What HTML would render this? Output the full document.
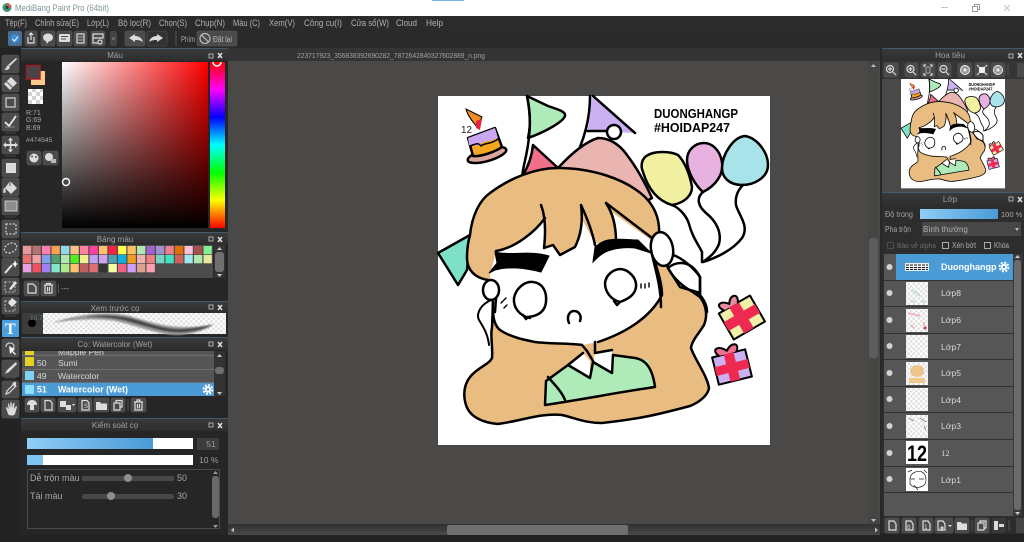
<!DOCTYPE html>
<html lang="vi"><head><meta charset="utf-8"><title>MediBang Paint Pro</title>
<style>
html,body{margin:0;padding:0;background:#222;width:1024px;height:542px;overflow:hidden}
svg{display:block;font-family:"Liberation Sans",sans-serif}
.m{fill:#b0b0b0;font-size:8.8px}
.h{fill:#a0a0a0;font-size:8px;text-anchor:middle}
.l{fill:#d8d8d8;font-size:8.6px}
.k{fill:#a9a9a9;font-size:8px}
.b{fill:#4b4b4b;stroke:#585858;stroke-width:.6}
.i{fill:#dcdcdc}
.s{fill:none;stroke:#dcdcdc;stroke-width:1.2}
.a{stroke:#000;stroke-width:2.5;stroke-linejoin:round;stroke-linecap:round}
.n{fill:none}
</style></head><body>
<svg width="1024" height="542" viewBox="0 0 1024 542" xmlns="http://www.w3.org/2000/svg">
<defs>
<clipPath id="huec"><rect x="205" y="62" width="25" height="20"/></clipPath>
<clipPath id="listc"><rect x="22" y="351" width="192" height="45"/></clipPath>
<filter id="soft" x="-5%" y="-20%" width="110%" height="140%"><feGaussianBlur stdDeviation=".9"/></filter>
<linearGradient id="sv1" x1="0" x2="1" y1="0" y2="0"><stop offset="0" stop-color="#fff"/><stop offset="1" stop-color="#f00"/></linearGradient>
<linearGradient id="sv2" x1="0" x2="0" y1="0" y2="1"><stop offset="0" stop-color="#000" stop-opacity="0"/><stop offset="1" stop-color="#000"/></linearGradient>
<linearGradient id="hue" x1="0" x2="0" y1="0" y2="1"><stop offset="0" stop-color="#f00"/><stop offset=".167" stop-color="#f0f"/><stop offset=".333" stop-color="#00f"/><stop offset=".5" stop-color="#0ff"/><stop offset=".667" stop-color="#0f0"/><stop offset=".833" stop-color="#ff0"/><stop offset="1" stop-color="#f00"/></linearGradient>
<linearGradient id="blu" x1="0" x2="1" y1="0" y2="0"><stop offset="0" stop-color="#8fcdf5"/><stop offset="1" stop-color="#4a9ad8"/></linearGradient>
<linearGradient id="hd" x1="0" x2="0" y1="0" y2="1"><stop offset="0" stop-color="#3a3a3a"/><stop offset="1" stop-color="#2e2e2e"/></linearGradient>
<linearGradient id="sc" x1="0" x2="0" y1="0" y2="1"><stop offset="0" stop-color="#303030"/><stop offset="1" stop-color="#4a4a4a"/></linearGradient>
<pattern id="chk" width="8" height="8" patternUnits="userSpaceOnUse"><rect width="8" height="8" fill="#fff"/><rect width="4" height="4" fill="#d4d4d4"/><rect x="4" y="4" width="4" height="4" fill="#d4d4d4"/></pattern>
<pattern id="chk2" width="5" height="5" patternUnits="userSpaceOnUse"><rect width="5" height="5" fill="#fff"/><rect width="2.5" height="2.5" fill="#e2e2e2"/><rect x="2.5" y="2.5" width="2.5" height="2.5" fill="#e2e2e2"/></pattern>
<g id="gear"><circle r="3.2" fill="#fff"/><circle r="4.4" fill="none" stroke="#fff" stroke-width="2" stroke-dasharray="2 1.45"/><circle r="1.3" fill="#4a9ad4"/></g>
<g id="art">
<rect x="438" y="96" width="332" height="349" fill="#fff"/>
<path d="M527,96C530,110 531,125 528,138C545,132 563,122 565,116C566,112 560,110 548,106Z" fill="#aeebb9" class="a"/>
<path d="M533,145L558,168L523,175C529,165 532,155 533,145Z" fill="#f0708c" class="a"/>
<path d="M590,96L635,133L587,131C590,120 591,108 590,96Z" fill="#cbb0f2"/>
<path d="M593,96L635,133M587,131L618,131" class="a n"/>
<path d="M527,96C532,120 530,140 524,165L522,176M590,96C590,115 586,132 580,147" class="a n"/>
<circle cx="614" cy="132" r="7" fill="#fff" class="a"/>
<path d="M558,168C570,155 585,142 598,138C610,138 620,145 627,155C637,168 646,185 652,198L640,205L570,180Z" fill="#eab5b0" class="a"/>
<path d="M672,205C685,203 692,195 692,187C690,175 685,162 678,155C670,151 655,151 648,155C642,158 640,165 643,172C647,185 655,200 672,205Z" fill="#f0f0a0" class="a"/>
<path d="M703,192C715,186 724,175 722,162C720,150 712,143 704,143C695,143 687,150 687,160C687,172 696,186 703,192Z" fill="#e8b2e0" class="a"/>
<path d="M742,185C755,185 768,177 768,165C768,152 757,138 745,136C733,137 722,155 722,168C722,178 730,185 742,185Z" fill="#a8e3ea" class="a"/>
<path d="M672,205C680,208 687,217 689,224C692,236 698,244 702,252L702,262M703,192C696,198 698,206 706,213C716,221 722,232 719,244C715,254 708,258 703,262C716,258 733,250 742,238C750,226 738,214 736,205C735,197 738,190 743,185" class="a n"/>
<path d="M438,253L470,235L467,270L458,285Z" fill="#7fe0c8" class="a"/>
<path d="M470,235C472,215 480,200 490,193C510,178 535,168 558,168C590,168 625,178 645,197C655,207 660,220 659,235L668,268C675,280 690,290 700,297C706,305 708,315 704,325C700,332 692,340 691,348C695,360 707,375 709,388C708,395 700,402 690,406C660,414 640,419 602,423C585,423 575,418 562,415C540,413 525,420 498,424C485,423 470,418 466,405C462,392 465,380 475,372C482,366 490,363 492,358C493,345 490,335 492,328L493,302L488,280C475,278 467,270 467,258C467,250 468,242 470,235Z" fill="#e9bd82" class="a"/>
<path d="M496,252C515,248 535,232 545,218L544,247L553,245L560,255L575,247C580,238 582,228 581,217L595,244L616,240L613,213L651,240L652,250L660,283L662,295C655,310 640,325 598,342L582,345C560,343 545,344 532,342C515,338 502,335 498,328C493,318 492,310 493,302L490,275Z" fill="#fff"/>
<path d="M493,302C492,318 495,326 500,330C510,337 525,340 535,342C550,344 570,343 582,345M598,342C625,333 650,318 662,295M652,250C655,265 662,280 662,295M496,251C515,248 535,232 545,218M541,205C545,215 546,230 544,248L553,245L560,255L575,247C581,235 583,220 581,205C588,220 593,235 595,245M606,203C612,212 616,225 616,241M606,203L652,238" class="a n"/>
<path d="M495,252C510,256 530,250 549,256L541,272C525,268 510,266 495,270L489,273L497,263Z" fill="#000" stroke="#000"/>
<path d="M593,262L595,247C600,243 603,241 608,240C620,238 630,240 638,240L651,253L635,248C625,247 618,248 611,250C603,252 598,257 593,262Z" fill="#000" stroke="#000"/>
<path d="M668,268C675,262 690,258 700,277L700,293L680,287Z" fill="#fff" class="a"/>
<path d="M673,255C682,258 694,268 700,277L700,295C704,300 707,305 707,312M668,268C675,282 690,291 700,296" class="a n"/>
<ellipse cx="662" cy="249" rx="11" ry="17" fill="#fff" class="a" transform="rotate(-10 662 249)"/>
<path d="M651,250C654,265 661,285 661,307" class="a n"/>
<ellipse cx="491" cy="290" rx="8" ry="10" fill="#fff" class="a"/>
<path d="M491,300C480,305 476,314 479,320C484,328 488,335 489,345" class="a n" style="stroke-width:2"/>
<path d="M496,298L495,312" class="a n"/>
<path d="M530,318C520,316 513,308 514,298C516,288 525,281 533,282C543,283 547,292 546,302C545,312 538,316 528,317L526,319L523,315" fill="#fff" class="a"/>
<path d="M620,302C612,300 605,293 605,283C606,275 613,269 621,269C629,270 637,278 636,287C635,295 628,299 620,302L617,305L614,301" fill="#fff" class="a"/>
<path d="M501,303L506,298M504,308L507,305M641,284V288M645,284V288M649,283V287" class="a n" style="stroke-width:1.4"/>
<path d="M569,323C566,316 570,311 574,311C579,311 582,316 580,321" class="a n"/>
<path d="M545,382L568,365L590,378L593,362L612,373L613,355L648,360L655,387L545,405Z" fill="#aeebb9"/>
<path d="M568,365L583,353L590,361L590,378ZM595,353L612,350L612,373L593,362Z" fill="#fff"/>
<path d="M545,405L546,381L568,365L590,378L593,362L612,373L613,355L635,358C648,360 653,372 655,387C620,392 585,399 545,405ZM568,365L583,353M595,342V353L612,350M548,377C555,385 562,392 565,400M582,345L587,351L593,361" class="a n"/>
<g transform="rotate(-30 741 318)"><rect x="724" y="303" width="36" height="30" fill="#f0f0a8" class="a" style="stroke-width:2"/><rect x="736" y="303" width="11" height="30" fill="#ee2a50"/><rect x="724" y="313" width="36" height="10" fill="#ee2a50"/><path d="M730,303C724,294 732,292 738,300C742,292 752,294 746,303" fill="#e88ca0" class="a" style="stroke-width:2"/></g>
<g transform="rotate(-14 732 367)"><rect x="715" y="353" width="34" height="28" fill="#cbb0f2" class="a" style="stroke-width:2"/><rect x="727" y="353" width="10" height="28" fill="#ee2a50"/><rect x="715" y="363" width="34" height="9" fill="#ee2a50"/><path d="M722,353C715,345 724,342 731,350C737,342 746,345 740,353" fill="#f07090" class="a" style="stroke-width:2"/></g>
<ellipse cx="487" cy="155" rx="20" ry="6" transform="rotate(-16 487 155)" fill="#dba6a0" class="a"/>
<path d="M468,138L495,128L502,147C495,152 480,157 473,156Z" fill="#f5a623" class="a"/>
<path d="M468,138L495,128L498,138C490,142 483,140 478,146C473,145 470,146 469,145Z" fill="#c9a8f0"/>
<path d="M470,146C476,144 478,142 481,146C486,142 490,145 498,139" class="a n" style="stroke-width:1.5"/>
<path d="M466,109L482,117L477,127C474,123 468,117 466,109Z" fill="#f08a28" stroke="#000"/>
<path d="M476,121L482,119L480,130L476,128Z" fill="#e82040"/>
<text x="461" y="133" font-size="10" fill="#222" textLength="11" lengthAdjust="spacingAndGlyphs">12</text>
<text x="654" y="118" font-size="13" font-weight="bold" fill="#000" textLength="84" lengthAdjust="spacingAndGlyphs">DUONGHANGP</text>
<text x="654" y="132" font-size="13" font-weight="bold" fill="#000" textLength="76" lengthAdjust="spacingAndGlyphs">#HOIDAP247</text>
</g>
</defs>

<rect width="1024" height="542" fill="#222"/>
<!-- title -->
<rect width="1024" height="16" fill="#fff"/>
<rect x="432" width="32" height="1" fill="#7ab6e0"/>
<circle cx="7" cy="7.5" r="4.5" fill="#3d9a6a"/><path d="M7,3A4.5,4.5 0 0 1 11.5,7.5L7,7.5Z" fill="#e2574c"/><circle cx="7" cy="7.5" r="1.6" fill="#1d3a5f"/>
<text x="15" y="11" font-size="9" fill="#84949c" textLength="94" lengthAdjust="spacingAndGlyphs">MediBang Paint Pro (64bit)</text>
<path d="M941,7.5H948" stroke="#c4c4c4"/><rect x="972.500" y="6.500" width="5" height="5" fill="none" stroke="#999"/><path d="M974.500,6.500V4.500H979.500V9.500H977.500" fill="none" stroke="#999"/>
<path d="M1004,5L1010,11M1010,5L1004,11" stroke="#c4c4c4"/>
<!-- menu -->
<rect y="16" width="1024" height="14" fill="#2b2b2b"/>
<g class="m" lengthAdjust="spacingAndGlyphs"><text x="5" y="26" textLength="22" lengthAdjust="spacingAndGlyphs">Tệp(F)</text><text x="35" y="26" textLength="44" lengthAdjust="spacingAndGlyphs">Chỉnh sửa(E)</text><text x="87" y="26" textLength="22" lengthAdjust="spacingAndGlyphs">Lớp(L)</text><text x="118" y="26" textLength="33" lengthAdjust="spacingAndGlyphs">Bộ lọc(R)</text><text x="159" y="26" textLength="28" lengthAdjust="spacingAndGlyphs">Chọn(S)</text><text x="195" y="26" textLength="30" lengthAdjust="spacingAndGlyphs">Chụp(N)</text><text x="233" y="26" textLength="27" lengthAdjust="spacingAndGlyphs">Màu (C)</text><text x="269" y="26" textLength="26" lengthAdjust="spacingAndGlyphs">Xem(V)</text><text x="304" y="26" textLength="38" lengthAdjust="spacingAndGlyphs">Công cụ(I)</text><text x="351" y="26" textLength="38" lengthAdjust="spacingAndGlyphs">Cửa sổ(W)</text><text x="396" y="26" textLength="21" lengthAdjust="spacingAndGlyphs">Cloud</text><text x="426" y="26" textLength="17" lengthAdjust="spacingAndGlyphs">Help</text></g>
<!-- toolbar -->
<rect y="30" width="1024" height="18" fill="#2a2a2a"/>
<rect x="8" y="31" width="14" height="15" rx="2" fill="#4a6f92"/><circle cx="15" cy="38.500" r="4.500" fill="#3f8fd8"/><path d="M12.500,39L14.500,41L18,36.500" stroke="#fff" fill="none"/>
<rect class="b" x="25" y="31" width="12" height="15" rx="2"/><path class="s" d="M28,37V43H34V37M31,40V33M29,35L31,33L33,35"/>
<rect class="b" x="41" y="31" width="14" height="15" rx="2"/><ellipse class="i" cx="48" cy="37.500" rx="5" ry="4"/><path class="i" d="M46,41L49,41L47,44Z"/>
<rect class="b" x="57" y="31" width="15" height="15" rx="2"/><rect class="i" x="59" y="34" width="11" height="8" rx="1"/><path d="M61,36.500H68M61,39H66" stroke="#555"/>
<rect class="b" x="74" y="31" width="13" height="15" rx="2"/><rect class="s" x="77" y="34" width="7" height="9"/><path d="M78,37H83M78,40H83" stroke="#ccc" stroke-width=".7"/>
<rect class="b" x="91" y="31" width="14" height="15" rx="2"/><path class="s" d="M93,34H103V38H93ZM93,38V43H98"/><circle class="s" cx="100" cy="42" r="2"/>
<rect x="110" y="31" width="7" height="15" rx="2" fill="#444"/><rect x="112" y="37" width="3" height="3" fill="#666"/>
<rect class="b" x="125" y="31" width="20" height="15" rx="2"/><path class="i" d="M129,38L135,34V36C139,36 142,38 143,42C140,40 138,40 135,40V42Z"/>
<rect x="147" y="31" width="20" height="15" rx="2" fill="#333" stroke="#555" stroke-width=".6"/><path class="i" d="M163,38L157,34V36C153,36 150,38 149,42C152,40 154,40 157,40V42Z"/>
<path d="M176,31V46" stroke="#3d5b70"/>
<text class="k" x="181" y="42" textLength="14" lengthAdjust="spacingAndGlyphs">Phím</text>
<rect class="b" x="197" y="31" width="40" height="15" rx="2"/><circle cx="205" cy="38.500" r="5" fill="none" stroke="#ccc"/><path d="M201.500,35L208.500,42" stroke="#ccc"/><text x="213" y="42" font-size="8" fill="#bbb" textLength="19" lengthAdjust="spacingAndGlyphs">Đặt lại</text>
<!-- tools column -->
<rect y="48" width="21" height="486" fill="#232323"/>
<g>
<rect class="b" x="2" y="55" width="17" height="18" rx="2"/><path class="i" d="M16,58L17,59L10,66L8,65Z"/><path class="i" d="M8,65L10,67C9,70 7,70 4,70C6,69 6,67 8,65Z"/>
<rect class="b" x="2" y="75" width="17" height="17" rx="2"/><path class="i" d="M11,77L17,83L10,90L4,84Z"/><path d="M6.500,81.500L12.500,87.500" stroke="#555"/>
<rect class="b" x="2" y="94" width="17" height="17" rx="2"/><rect x="6" y="98" width="9" height="9" fill="none" stroke="#ccc" stroke-width="1.300"/>
<rect class="b" x="2" y="113" width="17" height="18" rx="2"/><path d="M5,122L9,126L16,116" fill="none" stroke="#e8e8e8" stroke-width="1.800"/><path d="M5,127L15,127" stroke="#888"/>
<path d="M5,133H16" stroke="#444"/>
<rect class="b" x="2" y="136" width="17" height="18" rx="2"/><path class="i" d="M10.500,137.500L13,140.500H11.300V144H15V142.200L18,145L15,147.800V146H11.300V149.500H13L10.500,152.500L8,149.500H9.700V146H6V147.800L3,145L6,142.200V144H9.700V140.500H8Z"/>
<path d="M5,156H16" stroke="#444"/>
<rect class="b" x="2" y="159" width="17" height="18" rx="2"/><rect x="6" y="163" width="10" height="10" fill="#dcdcdc"/>
<rect class="b" x="2" y="178" width="17" height="18" rx="2"/><path class="i" d="M10,181L17,188L11,194L5,188ZM4,188C3,191 3,193 4.500,193C6,193 6,191 5,188Z"/><path d="M10,181V186" stroke="#555"/>
<rect class="b" x="2" y="197" width="17" height="18" rx="2"/><rect x="5" y="201" width="12" height="10" fill="#8d8d8d" stroke="#ddd" stroke-width=".8"/>
<path d="M5,217H16" stroke="#444"/>
<rect class="b" x="2" y="220" width="17" height="18" rx="2"/><rect x="6" y="224" width="10" height="10" fill="none" stroke="#ccc" stroke-width="1.300" stroke-dasharray="2 1.500"/>
<rect class="b" x="2" y="240" width="17" height="17" rx="2"/><ellipse cx="10.500" cy="248" rx="6.500" ry="4.500" transform="rotate(-25 10.500 248)" fill="none" stroke="#ccc" stroke-width="1.300" stroke-dasharray="2 1.500"/>
<rect class="b" x="2" y="258" width="17" height="18" rx="2"/><path d="M5,273L12,265" stroke="#e4e4e4" stroke-width="2"/><path d="M15,260L16,263L18,264L16,265L15,268L14,265L12,264L14,263Z" fill="#fff"/>
<rect class="b" x="2" y="278" width="17" height="17" rx="2"/><rect x="5" y="282" width="10" height="10" fill="none" stroke="#bbb" stroke-dasharray="2 1.500"/><path d="M9,289L15,281L17,283L11,290Z" fill="#e4e4e4"/>
<rect class="b" x="2" y="297" width="17" height="17" rx="2"/><rect x="5" y="301" width="10" height="10" fill="none" stroke="#bbb" stroke-dasharray="2 1.500"/><path d="M12,298L17,302L12,307L8,303Z" fill="#e4e4e4"/>
<path d="M5,316H16" stroke="#444"/>
<rect x="2" y="320" width="17" height="17" rx="1" fill="#4a9fe0"/><text x="5" y="334" font-family="Liberation Serif,serif" font-size="16" font-weight="bold" fill="#fff">T</text>
<rect class="b" x="2" y="339" width="17" height="18" rx="2"/><path d="M6,347C6,343 10,342 13,344C15,346 14,349 11,350" fill="none" stroke="#ccc" stroke-width="1.200"/><path d="M9,346L10,354L12,352L15,355L16,354L13,351L15,349Z" fill="#eee"/>
<rect class="b" x="2" y="360" width="17" height="17" rx="2"/><path class="i" d="M16,362L17,364L9,372L5,374L7,370Z"/>
<path d="M5,378H16" stroke="#444"/>
<rect class="b" x="2" y="381" width="17" height="17" rx="2"/><path d="M14,384L16,386L9,393L6,394L7,391Z" fill="none" stroke="#ddd" stroke-width="1.200"/><path class="i" d="M12,384L14,382C15,381 17,383 16,384L15,387Z"/>
<rect class="b" x="2" y="400" width="17" height="18" rx="2"/><path class="i" d="M6,408L8,414C9,416 14,416 15,414L17,407L16,406L14,409L14.500,403L13,403L12,408L11.500,402H10.500L10,408L9,403.500H8L8.500,410L7,406.500Z"/>
</g>
<!-- left panels -->
<rect x="21" y="48" width="207" height="486" fill="#262626"/>
<path d="M21,48.500H228M21,232.500H228M21,301.500H228M21,337.500H228M21,418.500H228" stroke="#3e5a6e"/>
<g fill="url(#hd)"><rect x="21" y="49" width="207" height="12"/><rect x="21" y="233" width="207" height="12"/><rect x="21" y="302" width="207" height="11"/><rect x="21" y="338" width="207" height="12"/><rect x="21" y="419" width="207" height="12"/></g>
<text class="h" x="115" y="58">Màu</text><text class="h" x="115" y="242">Bảng màu</text><text class="h" x="115" y="311">Xem trước cọ</text><text class="h" x="115" y="347">Cọ: Watercolor (Wet)</text><text class="h" x="115" y="428">Kiểm soát cọ</text>
<g fill="none" stroke="#bbb" stroke-width=".9"><rect x="209" y="54" width="4" height="4"/><rect x="209" y="237" width="4" height="4"/><rect x="209" y="305" width="4" height="4"/><rect x="209" y="342" width="4" height="4"/><rect x="209" y="423" width="4" height="4"/></g>
<g stroke="#ddd" stroke-width="1.500"><path d="M218,53L222,58M222,53L218,58M218,237L222,242M222,237L218,242M218,305L222,310M222,305L218,310M218,342L222,347M222,342L218,347M218,423L222,428M222,423L218,428"/></g>
<!-- colour -->
<rect x="62" y="62" width="146" height="166" fill="url(#sv1)"/><rect x="62" y="62" width="146" height="166" fill="url(#sv2)"/>
<rect x="210" y="62" width="15" height="166" fill="url(#hue)"/>
<circle cx="217" cy="62" r="4" fill="none" stroke="#fff" stroke-width="1.500" clip-path="url(#huec)"/>
<circle cx="66" cy="182" r="3.500" fill="none" stroke="#fff" stroke-width="1.400"/>
<rect x="31" y="71" width="14" height="14" fill="#ffc88a"/><rect x="26.500" y="65.500" width="13.500" height="13.500" fill="#474545" stroke="#a51822" stroke-width="1.400"/>
<rect x="28" y="89" width="15" height="15" fill="url(#chk)"/>
<g font-size="7" fill="#a8a8a8"><text x="26" y="115">R:71</text><text x="26" y="122">G:69</text><text x="26" y="130">B:69</text><text x="26" y="142" font-size="6.800">#474545</text></g>
<rect class="b" x="27" y="151" width="14" height="14" rx="2"/><circle class="i" cx="34" cy="158" r="4.500"/><circle cx="32" cy="156.500" r="1" fill="#555"/><circle cx="36" cy="157" r="1" fill="#555"/>
<rect class="b" x="43" y="151" width="15" height="14" rx="2"/><circle class="i" cx="49" cy="157" r="4"/><rect x="51" y="159" width="5" height="4" fill="#bbb"/>
<!-- palette -->
<rect x="22" y="245" width="191" height="33" fill="#4c4c4c"/>
<g>
<rect x="23" y="246" width="8.300" height="8.300" fill="#e89a9a"/><rect x="32.500" y="246" width="8.300" height="8.300" fill="#b87070"/><rect x="42" y="246" width="8.300" height="8.300" fill="#ff80b0"/><rect x="51.500" y="246" width="8.300" height="8.300" fill="#ffa050"/><rect x="61" y="246" width="8.300" height="8.300" fill="#90d8e8"/><rect x="70.500" y="246" width="8.300" height="8.300" fill="#ffc080"/><rect x="80" y="246" width="8.300" height="8.300" fill="#ff80a0"/><rect x="89.500" y="246" width="8.300" height="8.300" fill="#ff40a0"/><rect x="99" y="246" width="8.300" height="8.300" fill="#ffc070"/><rect x="108.500" y="246" width="8.300" height="8.300" fill="#ff2040"/><rect x="118" y="246" width="8.300" height="8.300" fill="#ffff50"/><rect x="127.500" y="246" width="8.300" height="8.300" fill="#ffc060"/><rect x="137" y="246" width="8.300" height="8.300" fill="#b0e8b0"/><rect x="146.500" y="246" width="8.300" height="8.300" fill="#a060d0"/><rect x="156" y="246" width="8.300" height="8.300" fill="#a090d0"/><rect x="165.500" y="246" width="8.300" height="8.300" fill="#f08090"/><rect x="175" y="246" width="8.300" height="8.300" fill="#e07000"/><rect x="184.500" y="246" width="8.300" height="8.300" fill="#ffc0d8"/><rect x="194" y="246" width="8.300" height="8.300" fill="#a85050"/><rect x="203.500" y="246" width="8.300" height="8.300" fill="#80f090"/>
<rect x="23" y="255" width="8.300" height="8.300" fill="#e87070"/><rect x="32.500" y="255" width="8.300" height="8.300" fill="#f0a0a0"/><rect x="42" y="255" width="8.300" height="8.300" fill="#80a0f0"/><rect x="51.500" y="255" width="8.300" height="8.300" fill="#50a070"/><rect x="61" y="255" width="8.300" height="8.300" fill="#b0e8b0"/><rect x="70.500" y="255" width="8.300" height="8.300" fill="#50f020"/><rect x="80" y="255" width="8.300" height="8.300" fill="#f0f090"/><rect x="89.500" y="255" width="8.300" height="8.300" fill="#c0a0f0"/><rect x="99" y="255" width="8.300" height="8.300" fill="#d0a0f0"/><rect x="108.500" y="255" width="8.300" height="8.300" fill="#50a0b0"/><rect x="118" y="255" width="8.300" height="8.300" fill="#10b0e0"/><rect x="127.500" y="255" width="8.300" height="8.300" fill="#f0a020"/><rect x="137" y="255" width="8.300" height="8.300" fill="#f0b0b0"/><rect x="146.500" y="255" width="8.300" height="8.300" fill="#f08080"/><rect x="156" y="255" width="8.300" height="8.300" fill="#70d8c0"/><rect x="165.500" y="255" width="8.300" height="8.300" fill="#40e0c0"/><rect x="175" y="255" width="8.300" height="8.300" fill="#d06060"/><rect x="184.500" y="255" width="8.300" height="8.300" fill="#a0e8f0"/><rect x="194" y="255" width="8.300" height="8.300" fill="#b0e8b0"/><rect x="203.500" y="255" width="8.300" height="8.300" fill="#e8e8a0"/>
<rect x="23" y="264" width="8.300" height="8.300" fill="#e8a0e0"/><rect x="32.500" y="264" width="8.300" height="8.300" fill="#f05060"/><rect x="42" y="264" width="8.300" height="8.300" fill="#a080f0"/><rect x="51.500" y="264" width="8.300" height="8.300" fill="#80e8c8"/><rect x="61" y="264" width="8.300" height="8.300" fill="#b0e890"/><rect x="70.500" y="264" width="8.300" height="8.300" fill="#ffc070"/><rect x="80" y="264" width="8.300" height="8.300" fill="#c06060"/><rect x="89.500" y="264" width="8.300" height="8.300" fill="#e07070"/><rect x="99" y="264" width="8.300" height="8.300" fill="#333"/><rect x="108.500" y="264" width="8.300" height="8.300" fill="#f0ffa0"/><rect x="118" y="264" width="8.300" height="8.300" fill="#f06080"/><rect x="127.500" y="264" width="8.300" height="8.300" fill="#d0a0f8"/><rect x="137" y="264" width="8.300" height="8.300" fill="#e0a090"/><rect x="146.500" y="264" width="8.300" height="8.300" fill="#ffa0b0"/>
</g>
<rect x="214" y="245" width="11" height="33" fill="#333"/><rect x="215" y="252" width="9" height="20" rx="3" fill="#6f6f6f"/>
<path d="M219.500,247L222,250H217ZM219.500,277L222,274H217Z" fill="#ccc"/>
<rect class="b" x="24" y="281" width="15" height="15" rx="2"/><path class="s" d="M28,284H33L36,287V293H28Z"/>
<rect class="b" x="41" y="281" width="15" height="15" rx="2"/><path class="s" d="M44,285H53M45,285V293H52V285M47.500,287V291.500M49.500,287V291.500M46.500,285V283.500H50.500V285"/>
<path d="M58.500,284V293" stroke="#555"/><text x="61" y="291" font-size="8" fill="#aaa">---</text>
<!-- brush preview -->
<rect x="22" y="313" width="21" height="21" fill="#3c3c3c"/><rect x="43" y="313" width="183" height="21" fill="url(#chk2)"/>
<circle cx="32" cy="323" r="4" fill="#000"/><text x="30" y="320" font-size="6.500" fill="#667c88">10.7</text>
<path filter="url(#soft)" d="M52,323C75,315 105,310 130,316C150,322 165,327 185,327C198,327 208,325 214,324C205,331 190,335 175,335C155,334 135,325 115,321C95,318 70,320 52,323Z" fill="#9a9a9a"/>
<path filter="url(#soft)" d="M85,317C105,314 125,316 140,321C155,326 170,330 185,329C198,328 208,326 212,325C200,331 185,333 172,332C155,330 135,322 118,319C105,317 95,317 85,317Z" fill="#444"/>
<!-- brush list -->
<rect x="22" y="351" width="192" height="45" fill="#555"/>
<g clip-path="url(#listc)"><rect x="25" y="351" width="9" height="4" fill="#e3d21e"/><text x="58" y="355" font-size="8.600" fill="#ddd">Mapple Pen</text></g>
<path d="M22,355.500H214M22,369.500H214M22,382.500H214" stroke="#777" stroke-width=".7"/>
<rect x="25" y="357" width="9" height="9" fill="#e3d21e"/><text class="l" x="37" y="366">50</text><text class="l" x="58" y="366">Sumi</text>
<rect x="25" y="371" width="9" height="9" fill="#7fd3f2"/><text class="l" x="37" y="379">49</text><text class="l" x="58" y="379">Watercolor</text>
<rect x="22" y="383" width="192" height="13" fill="#4b9bd6"/>
<rect x="25" y="385" width="9" height="9" fill="#8fe0ff"/><text x="37" y="392.500" font-size="8.800" font-weight="bold" fill="#fff">51</text><text x="58" y="392.500" font-size="8.800" font-weight="bold" fill="#fff">Watercolor (Wet)</text>
<use href="#gear" x="208" y="389.500"/>
<rect x="214" y="351" width="11" height="45" fill="#333"/><rect x="215" y="367" width="9" height="7" rx="3" fill="#6f6f6f"/>
<path d="M219.500,354L222,357H217ZM219.500,395L222,392H217Z" fill="#ccc"/>
<g>
<rect class="b" x="25" y="398" width="14" height="14" rx="2"/><path class="i" d="M32,400C28,400 27,403 27,405H30V410H34V405H37C37,403 36,400 32,400Z"/>
<rect class="b" x="41" y="398" width="14" height="14" rx="2"/><path class="s" d="M45,400.500H50L52,403V410H45Z"/>
<rect class="b" x="58" y="398" width="18" height="14" rx="2"/><path class="i" d="M60,401H66V407H60ZM66,405H71V410H66Z"/><path d="M72,404L75,404L73.500,406Z" fill="#ddd"/>
<rect class="b" x="78" y="398" width="14" height="14" rx="2"/><path class="s" d="M82,400.500H87L89,403V410H82Z"/><text x="84" y="408" font-size="6" fill="#ddd">S</text>
<rect class="b" x="94" y="398" width="15" height="14" rx="2"/><path class="i" d="M96,402H100L101,403.500H107V410H96Z"/>
<rect class="b" x="111" y="398" width="14" height="14" rx="2"/><path class="s" d="M114,403H120V410H114ZM116,403V400.500H122V407H120"/>
<path d="M128,399V411" stroke="#555"/>
<rect class="b" x="131" y="398" width="15" height="14" rx="2"/><path class="s" d="M134,402H143M135,402V410H142V402M137.500,404V408.500M139.500,404V408.500M137,402V400H140V402"/>
</g>
<!-- brush control -->
<rect x="27" y="438" width="166" height="11" fill="#fff"/><rect x="27" y="438" width="126" height="11" fill="url(#blu)"/>
<rect x="197" y="438" width="22" height="12" fill="#3d3d3d"/><text x="211" y="447" font-size="8.500" fill="#999" text-anchor="middle">51</text>
<rect x="27" y="455" width="166" height="10" fill="#fff"/><rect x="27" y="455" width="16" height="10" fill="#7fc4f5"/>
<text x="199" y="463" font-size="8.500" fill="#a0a0a0">10 %</text>
<rect x="27.500" y="469.500" width="192" height="59" fill="none" stroke="#4a4a4a"/>
<text x="30" y="481" font-size="9" fill="#a8a8a8">Dễ trộn màu</text><rect x="82" y="476" width="92" height="5" rx="2" fill="#484848"/><circle cx="128" cy="478" r="4" fill="#8e8e8e"/><text x="177" y="481" font-size="9" fill="#a8a8a8">50</text>
<text x="30" y="499" font-size="9" fill="#a8a8a8">Tải màu</text><rect x="82" y="494" width="92" height="5" rx="2" fill="#484848"/><circle cx="111" cy="496" r="4" fill="#8e8e8e"/><text x="177" y="499" font-size="9" fill="#a8a8a8">30</text>
<rect x="212" y="476" width="7" height="42" rx="3" fill="#686868"/>
<path d="M215.500,471L218,474H213ZM215.500,528L218,525H213Z" fill="#999"/>
<!-- canvas -->
<rect x="228" y="48" width="652" height="13" fill="#343434"/>
<rect x="228" y="61" width="652" height="474" fill="#4a4948"/>
<text x="297" y="58" font-size="7.400" fill="#a2a2a2" textLength="188" lengthAdjust="spacingAndGlyphs">223717923_356838392690282_7872642840327602889_n.png</text>
<use href="#art"/>
<!-- canvas scrollbars -->
<rect x="868" y="61" width="11" height="464" fill="#454544"/><rect x="869" y="238" width="9" height="120" rx="3" fill="#5d5d5d"/>
<path d="M873.500,64L876,67H871ZM873.500,522L876,519H871Z" fill="#bbb"/>
<rect x="228" y="524" width="652" height="11" fill="url(#sc)"/>
<rect x="447" y="525" width="181" height="10" rx="2" fill="#6f6f6f"/>
<path d="M231,530L234,527.500V532.500ZM878,530L875,527.500V532.500Z" fill="#bbb"/>
<!-- right: navigator -->
<rect x="880" y="48" width="144" height="486" fill="#282828"/>
<rect x="882" y="49" width="142" height="144" fill="#4a4948"/>
<rect x="882" y="49" width="142" height="12" fill="url(#hd)"/>
<path d="M882,48.500H1024M882,192.500H1024" stroke="#3e5a6e"/>
<text class="h" x="950" y="58">Hoa tiêu</text>
<g fill="none" stroke="#bbb" stroke-width=".9"><rect x="1009" y="54" width="4" height="4"/><rect x="1009" y="197" width="4" height="4"/></g>
<path d="M1018,53L1022,58M1022,53L1018,58M1018,197L1022,202M1022,197L1018,202" stroke="#ddd" stroke-width="1.500"/>
<rect x="882" y="61" width="142" height="18" fill="#363636"/>
<g>
<rect class="b" x="884" y="63" width="14" height="14" rx="2"/><circle class="s" cx="890" cy="69" r="3.500"/><path class="s" d="M893,72L896,75M888,69H892M890,67V71"/>
<rect class="b" x="905" y="63" width="13" height="14" rx="2"/><circle class="s" cx="910.500" cy="69" r="3.500"/><path class="s" d="M913,72L916,75M908.500,69H912.500M910.500,67V71"/>
<rect class="b" x="921" y="63" width="14" height="14" rx="2"/><path class="s" d="M924,67V65H926M932,67V65H930M924,73V75H926M932,73V75H930"/><rect x="926" y="67" width="4" height="6" fill="none" stroke="#ccc" stroke-width=".7"/>
<rect class="b" x="938" y="63" width="13" height="14" rx="2"/><circle class="s" cx="943.500" cy="69" r="3.500"/><path class="s" d="M946,72L949,75M941.500,69H945.500"/>
<rect class="b" x="958" y="63" width="14" height="14" rx="2"/><circle cx="965" cy="70" r="4.500" fill="#999" stroke="#eee"/><circle cx="965" cy="70" r="1.500" fill="#eee"/>
<rect class="b" x="975" y="63" width="14" height="14" rx="2"/><rect x="979" y="67" width="6" height="6" fill="#eee"/><path class="s" d="M977,65L980,68M987,65L984,68M977,75L980,72M987,75L984,72"/>
<rect class="b" x="991" y="63" width="14" height="14" rx="2"/><circle cx="998" cy="70" r="4.500" fill="#999" stroke="#eee"/><circle cx="998" cy="70" r="1.500" fill="#eee"/>
<path d="M1008,65V75" stroke="#555"/><rect x="1017" y="63" width="7" height="14" fill="#4a4a4a"/>
</g>
<use href="#art" transform="translate(901 79) scale(.3133) translate(-438 -96)"/>
<!-- layers -->
<rect x="882" y="193" width="142" height="341" fill="#2d2d2d"/>
<rect x="882" y="193" width="142" height="12" fill="url(#hd)"/>
<path d="M882,192.500H1024" stroke="#3e5a6e"/>
<text class="h" x="950" y="202">Lớp</text>
<g fill="none" stroke="#bbb" stroke-width=".9"><rect x="1009" y="197" width="4" height="4"/></g>
<path d="M1018,197L1022,202M1022,197L1018,202" stroke="#ddd" stroke-width="1.500"/>
<text x="885" y="217" font-size="8" fill="#a0a0a0" textLength="28" lengthAdjust="spacingAndGlyphs">Độ trong</text>
<rect x="920" y="209" width="78" height="10" fill="url(#blu)"/>
<text x="1001" y="217" font-size="7.500" fill="#a8a8a8">100 %</text>
<text x="885" y="232" font-size="8" fill="#a8a8a8" textLength="26" lengthAdjust="spacingAndGlyphs">Pha trộn</text>
<rect x="922" y="222" width="99" height="14" fill="#474747"/><text x="923" y="232" font-size="8" fill="#b0b0b0">Bình thường</text><path d="M1015,228H1019L1017,231Z" fill="#bbb"/>
<rect x="887.500" y="242.500" width="6" height="6" fill="none" stroke="#4c4c4c"/><text x="897" y="248" font-size="7.600" fill="#6a6a6a" textLength="39" lengthAdjust="spacingAndGlyphs">Bảo vệ alpha</text>
<rect x="942.500" y="242.500" width="6" height="6" fill="none" stroke="#aaa"/><text x="952" y="248" font-size="7.800" fill="#b0b0b0" textLength="24" lengthAdjust="spacingAndGlyphs">Xén bớt</text>
<rect x="984.500" y="242.500" width="6" height="6" fill="none" stroke="#aaa"/><text x="994" y="248" font-size="7.800" fill="#b0b0b0" textLength="15" lengthAdjust="spacingAndGlyphs">Khóa</text>
<rect x="884" y="254" width="129" height="262" fill="#565656"/>
<rect x="896" y="254" width="117" height="26" fill="#4b9bd6"/>
<path d="M884,280.500H1013M884,306.500H1013M884,333.500H1013M884,359.500H1013M884,386.500H1013M884,412.500H1013M884,439.500H1013M884,466.500H1013M884,492.500H1013" stroke="#303030"/>
<g fill="#d2d2d2"><circle cx="889.500" cy="267" r="3"/><circle cx="889.500" cy="293" r="3"/><circle cx="889.500" cy="320" r="3"/><circle cx="889.500" cy="346" r="3"/><circle cx="889.500" cy="373" r="3"/><circle cx="889.500" cy="399" r="3"/><circle cx="889.500" cy="426" r="3"/><circle cx="889.500" cy="453" r="3"/><circle cx="889.500" cy="479" r="3"/></g>
<!-- thumbs -->
<rect x="905" y="263" width="24" height="8" fill="#eee"/><path d="M906,265H928M906,267.500H928M906,269.500H928" stroke="#222" stroke-width=".9" stroke-dasharray="3 1"/>
<rect x="906" y="282" width="22" height="23" fill="url(#chk2)"/><path d="M912,290L920,296M922,300L925,303M910,300L915,302" stroke="#b8dcc0" stroke-width="1.400"/>
<rect x="906" y="309" width="22" height="23" fill="url(#chk2)"/><path d="M908,313L920,316M924,322V326M911,325L914,328" stroke="#f0a0a8" stroke-width="1.400"/><circle cx="925" cy="328" r="1.500" fill="#d03040"/>
<rect x="906" y="335" width="22" height="23" fill="url(#chk2)"/>
<rect x="906" y="362" width="22" height="23" fill="url(#chk2)"/><ellipse cx="917" cy="371" rx="7" ry="6" fill="#eec48d"/><rect x="909" y="378" width="16" height="5" fill="#f0c890"/>
<rect x="906" y="388" width="22" height="23" fill="url(#chk2)"/>
<rect x="906" y="415" width="22" height="23" fill="url(#chk2)"/><path d="M909,418L914,421M920,418L926,422M924,426L926,430" stroke="#555" stroke-width=".6"/>
<rect x="906" y="441" width="22" height="23" fill="#fff"/><text x="917" y="461" text-anchor="middle" font-size="22" font-weight="bold" fill="#000" textLength="20" lengthAdjust="spacingAndGlyphs">12</text>
<rect x="906" y="468" width="22" height="23" fill="#fff"/><path d="M910,478C911,473 917,470 922,472C926,474 927,480 925,484C921,489 913,488 910,484ZM910,479H915M919,479H924M908,472L912,470M924,470L927,473M914,485L918,490" fill="none" stroke="#222" stroke-width=".7"/>
<text x="941" y="270" font-size="9" font-weight="bold" fill="#fff">Duonghangp</text>
<use href="#gear" x="1004" y="267"/>
<g class="l"><text x="941" y="296">Lớp8</text><text x="941" y="323">Lớp6</text><text x="941" y="350">Lớp7</text><text x="941" y="376">Lớp5</text><text x="941" y="403">Lớp4</text><text x="941" y="429">Lớp3</text><text x="941" y="456" font-family="Liberation Serif,serif">12</text><text x="941" y="483">Lớp1</text></g>
<rect x="1013" y="254" width="9" height="262" fill="#3a3a3a"/><rect x="1014" y="260" width="7" height="250" rx="3" fill="#6b6b6b"/>
<path d="M1017.500,255L1020,258H1015ZM1017.500,515L1020,512H1015Z" fill="#ccc"/>
<!-- layer bottom bar -->
<g>
<rect class="b" x="885" y="518" width="14" height="15" rx="2"/><path class="s" d="M889,521H894L896,524V530H889Z"/>
<rect class="b" x="902" y="518" width="14" height="15" rx="2"/><path class="s" d="M906,521H911L913,524V530H906Z"/><text x="907" y="529" font-size="6.500" fill="#ddd">8</text>
<rect class="b" x="919" y="518" width="14" height="15" rx="2"/><path class="s" d="M923,521H928L930,524V530H923Z"/><text x="924" y="529" font-size="6.500" fill="#ddd">1</text>
<rect class="b" x="935" y="518" width="18" height="15" rx="2"/><path class="s" d="M938,521H943L945,524V530H938Z"/><path d="M942,526V531M940,528H944" stroke="#eee"/><path d="M948,525H952L950,527Z" fill="#ddd"/>
<rect class="b" x="955" y="518" width="14" height="15" rx="2"/><path class="i" d="M957,522H961L962,523.500H967V530H957Z"/>
<path d="M972,520V531" stroke="#555"/>
<rect class="b" x="975" y="518" width="14" height="15" rx="2"/><path class="s" d="M978,523H984V530H978ZM980,523V521H986V528H984"/>
<rect x="992" y="518" width="14" height="15" rx="2" fill="#3a3a3a"/><path class="i" d="M994,521H998V530H994ZM999,524H1004V527H999Z"/>
<path d="M1009,520V531" stroke="#555"/><rect x="1016" y="518" width="8" height="15" fill="#444"/>
</g>
</svg>
</body></html>
